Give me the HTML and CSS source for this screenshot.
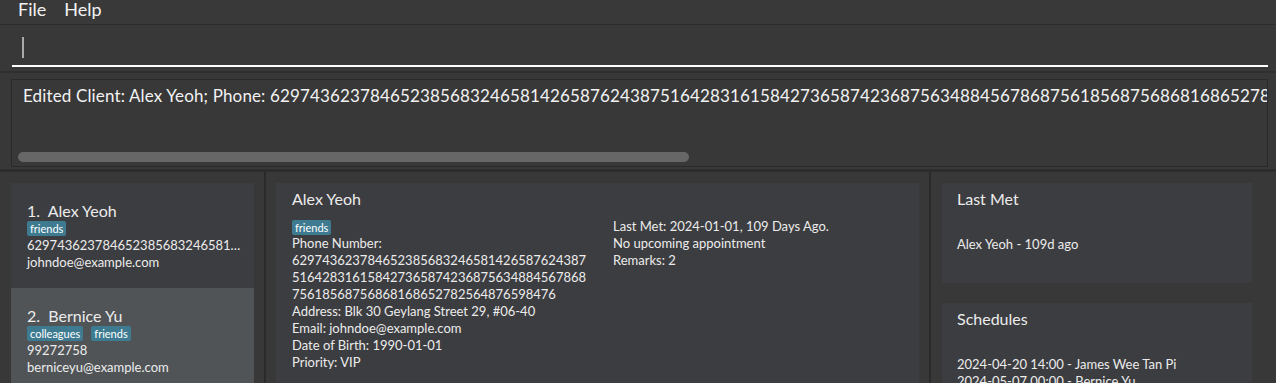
FILE: index.html
```html
<!DOCTYPE html>
<html lang="en">
<head>
    <meta charset="UTF-8">
    <title>Address App</title>
    <link rel="stylesheet" href="styles.css">
</head>
<body>
    <div class="menubar">
        <span class="menu-item">File</span>
        <span class="menu-item">Help</span>
    </div>

    <div class="command-box">
        <div class="command-field"><span class="caret"></span></div>
    </div>

    <div class="result-wrap">
        <div class="result-box">
            <div class="result-text">Edited Client: Alex Yeoh; Phone: 62974362378465238568324658142658762438751642831615842736587423687563488456786875618568756868168652782564876598476; Email: johndoe@example.com</div>
            <div class="scrollbar"><div class="thumb"></div></div>
        </div>
    </div>

    <div class="main">
        <div class="list-pane">
            <div class="person-card">
                <div class="card-name">1.&nbsp;&nbsp;Alex Yeoh</div>
                <div class="tags"><span class="tag">friends</span></div>
                <div class="card-line ellipsis">62974362378465238568324658142658762438751642831615842736587423687563488456786875618568756868168652782564876598476</div>
                <div class="card-line">johndoe@example.com</div>
            </div>
            <div class="person-card selected">
                <div class="card-name">2.&nbsp;&nbsp;Bernice Yu</div>
                <div class="tags"><span class="tag">colleagues</span><span class="tag">friends</span></div>
                <div class="card-line">99272758</div>
                <div class="card-line">berniceyu@example.com</div>
            </div>
        </div>

        <div class="divider"></div>

        <div class="detail-pane">
            <div class="detail-card">
                <div class="detail-title">Alex Yeoh</div>
                <div class="detail-cols">
                    <div class="detail-left">
                        <div class="tags"><span class="tag">friends</span></div>
                        <div class="detail-line">Phone Number:</div>
                        <div class="detail-line">629743623784652385683246581426587624387</div>
                        <div class="detail-line">516428316158427365874236875634884567868</div>
                        <div class="detail-line">75618568756868168652782564876598476</div>
                        <div class="detail-line">Address: Blk 30 Geylang Street 29, #06-40</div>
                        <div class="detail-line">Email: johndoe@example.com</div>
                        <div class="detail-line">Date of Birth: 1990-01-01</div>
                        <div class="detail-line">Priority: VIP</div>
                    </div>
                    <div class="detail-right">
                        <div class="detail-line">Last Met: 2024-01-01, 109 Days Ago.</div>
                        <div class="detail-line">No upcoming appointment</div>
                        <div class="detail-line">Remarks: 2</div>
                    </div>
                </div>
            </div>
        </div>

        <div class="divider"></div>

        <div class="side-pane">
            <div class="side-card lastmet">
                <div class="side-title">Last Met</div>
                <div class="side-line">Alex Yeoh - 109d ago</div>
            </div>
            <div class="side-card schedules">
                <div class="side-title">Schedules</div>
                <div class="side-line">2024-04-20 14:00 - James Wee Tan Pi</div>
                <div class="side-line">2024-05-07 00:00 - Bernice Yu</div>
            </div>
        </div>
    </div>
</body>
</html>
```

FILE: styles.css
```css
body {
    margin: 0;
    height: 383px;
    overflow: hidden;
    background-color: #383838;
    color: #ececec;
    font-family: Lato, Inter, sans-serif;
}

.menubar {
    height: 24px;
    display: flex;
    align-items: flex-start;
    padding-left: 18px;
    gap: 18px;
    border-bottom: 1px solid #2c2c2c;
    background-color: #393939;
}

.menu-item {
    font-size: 18px;
    line-height: 18px;
    color: #f2f2f2;
}

.command-box {
    height: 46px;
    padding: 0 8px 0 12px;
    border-bottom: 2px solid #2f2f2f;
}

.command-field {
    height: 40px;
    border-bottom: 2px solid #ffffff;
    display: flex;
    align-items: center;
    padding-left: 10px;
}

.caret {
    width: 2px;
    height: 21px;
    margin-top: 4px;
    background-color: #aaaaaa;
}

.result-wrap {
    height: 99px;
    padding: 6px 8px 0 11px;
    border-bottom: 3px solid #2c2c2c;
    box-sizing: border-box;
}

.result-box {
    height: 88px;
    border: 1px solid #2a2a2a;
    overflow: hidden;
    position: relative;
    box-sizing: border-box;
}

.result-text {
    white-space: nowrap;
    font-size: 17px;
    line-height: 20px;
    letter-spacing: 0.14px;
    padding: 6px 0 0 11px;
    color: #f2f2f2;
}

.scrollbar {
    position: absolute;
    left: 6px;
    right: 6px;
    bottom: 4px;
    height: 10px;
}

.thumb {
    width: 671px;
    height: 10px;
    border-radius: 5px;
    background-color: #676767;
}

.main {
    display: flex;
    height: 211px;
    overflow: hidden;
    padding-top: 11px;
    box-sizing: border-box;
}

.divider {
    width: 2px;
    background-color: #2a2a2a;
    margin-top: -11px;
}

.list-pane {
    width: 243px;
    margin: 0 10px 0 11px;
    background-color: #3c3d40;
}

.person-card {
    height: 105px;
    padding: 19px 0 0 16px;
    box-sizing: border-box;
    background-color: #3c3d40;
}

.person-card.selected {
    background-color: #505457;
}

.card-name {
    font-size: 16px;
    line-height: 18px;
    margin-bottom: 1px;
}

.tags {
    display: flex;
    gap: 8px;
    margin-bottom: 1px;
}

.tag {
    background-color: #3e7b91;
    color: #ffffff;
    font-size: 11px;
    line-height: 15px;
    padding: 0 3px;
    border-radius: 2px;
}

.card-line {
    font-size: 13px;
    line-height: 17px;
}

.ellipsis {
    width: 216px;
    white-space: nowrap;
    overflow: hidden;
    text-overflow: ellipsis;
}

.detail-pane {
    width: 643px;
    margin: 0 10px 0 10px;
}

.detail-card {
    height: 100%;
    background-color: #3c3d40;
    padding: 7px 0 0 16px;
    box-sizing: border-box;
}

.detail-title {
    font-size: 16px;
    line-height: 18px;
    margin-bottom: 12px;
}

.detail-cols {
    display: flex;
}

.detail-left {
    width: 321px;
}

.detail-left .tags {
    margin-bottom: 0;
}

.detail-right {
    margin-top: -2px;
}

.detail-line {
    font-size: 13px;
    line-height: 17px;
}

.side-pane {
    width: 310px;
    margin-left: 11px;
    display: flex;
    flex-direction: column;
    gap: 20px;
}

.side-card {
    background-color: #3c3d40;
    padding: 7px 0 0 15px;
    box-sizing: border-box;
    flex-shrink: 0;
}

.side-card.lastmet {
    height: 100px;
}

.side-card.schedules {
    flex: 1;
}

.side-title {
    font-size: 16px;
    line-height: 18px;
    margin-bottom: 28px;
}

.side-line {
    font-size: 13px;
    line-height: 17px;
}
```
